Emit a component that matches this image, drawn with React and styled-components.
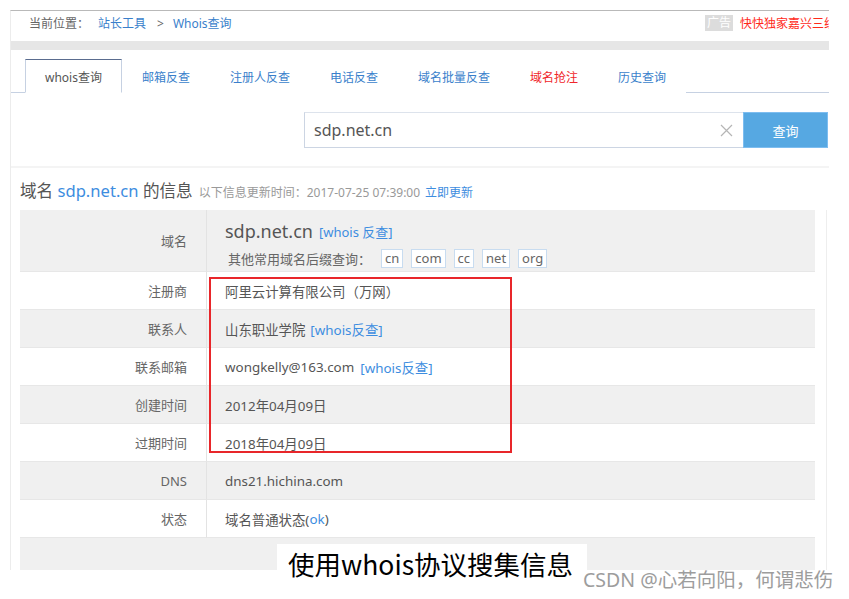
import React from "react";
import styled, { createGlobalStyle } from "styled-components";

const GlobalStyle = createGlobalStyle`
  html, body { margin: 0; padding: 0; background: #fff; }
  body { font-family: "Noto Sans", "Noto Sans CJK SC", sans-serif; }
  * { box-sizing: border-box; }
`;

const Page = styled.div`
  position: relative;
  width: 849px;
  height: 599px;
  padding: 10px 0 0 10px;
  overflow: hidden;
`;

const Frame = styled.div`
  width: 819px;
  height: 560px;
  border-top: 1px solid #b9b9b9;
  border-left: 1px solid #ececec;
  overflow: hidden;
  display: flex;
  flex-direction: column;
`;

const Breadcrumb = styled.div`
  height: 30px;
  flex-shrink: 0;
  display: flex;
  align-items: center;
  padding: 0 0 6px 18px;
  font-size: 12px;
  color: #666;
  white-space: nowrap;
`;

const Crumb = styled.span`
  color: ${(p) => (p.$link ? "#3a7fcb" : "#666")};
  margin-left: ${(p) => p.$ml || 0}px;
`;

const AdBox = styled.div`
  margin-left: auto;
  width: 124px;
  flex-shrink: 0;
  overflow: hidden;
  display: flex;
  align-items: center;
  gap: 7px;
`;

const AdBadge = styled.span`
  background: #dcdcdc;
  color: #fff;
  font-size: 12px;
  line-height: 16px;
  padding: 0 2px;
  flex-shrink: 0;
`;

const AdText = styled.span`
  color: #ff2a1a;
  font-size: 12px;
  flex-shrink: 0;
`;

const GrayBand = styled.div`
  height: 9px;
  flex-shrink: 0;
  background: #e6e6e6;
`;

const TabBar = styled.div`
  flex-shrink: 0;
  display: flex;
  padding: 9px 0 0 14px;
  border-bottom: 1px solid #c6d1e2;
`;

const Tab = styled.div`
  height: 34px;
  padding: 0 19px;
  display: flex;
  align-items: center;
  padding-top: 1px;
  font-size: 12px;
  white-space: nowrap;
  margin-bottom: -1px;
  border: 1px solid ${(p) => (p.$active ? "#c6d1e2" : "transparent")};
  border-top-color: ${(p) => (p.$active ? "#5a6c8f" : "transparent")};
  border-bottom-color: ${(p) => (p.$active ? "#fff" : "transparent")};
  background: #fff;
  color: ${(p) => (p.$active ? "#555" : p.$red ? "#f0262a" : "#3a7fcb")};
`;

const SearchArea = styled.div`
  flex-shrink: 0;
  height: 75px;
  padding: 19px 0 0 293px;
  display: flex;
  align-items: flex-start;
  border-bottom: 2px solid #f4f4f4;
`;

const SearchInput = styled.div`
  width: 439px;
  height: 36px;
  border: 1px solid #ccd5e3;
  border-top-color: #dde3ec;
  border-right: none;
  display: flex;
  align-items: center;
  padding: 0 10px 0 9px;
  font-size: 16px;
  color: #555;
`;

const ClearIcon = styled.svg`
  margin-left: auto;
  width: 13px;
  height: 13px;
`;

const SearchButton = styled.div`
  width: 85px;
  height: 36px;
  background: #56a8e2;
  border: 1px solid #7dbdf0;
  color: #fff;
  font-size: 13px;
  display: flex;
  align-items: center;
  justify-content: center;
`;

const InfoSection = styled.div`
  padding-left: 9px;
  flex: 1;
  display: flex;
  flex-direction: column;
`;

const Title = styled.div`
  height: 42px;
  padding-top: 10px;
  line-height: 26px;
  font-size: 16.6px;
  color: #555;
  white-space: nowrap;
`;

const TitleLink = styled.span`
  color: #3d8de0;
`;

const UpdateNote = styled.span`
  font-size: 12px;
  color: #999;
  margin-left: 6px;
`;

const UpdateLink = styled.span`
  font-size: 12px;
  color: #3d8de0;
  margin-left: 5px;
`;

const TableWrap = styled.div`
  flex: 1;
  width: 807px;
  padding-right: 12px;
  border-right: 1px solid #eeeeee;
`;

const Table = styled.div`
  width: 795px;
  display: grid;
  grid-template-columns: 187px 1fr;
`;

const Label = styled.div`
  height: ${(p) => p.$h || 38}px;
  background: ${(p) => (p.$gray ? "#f0f0f0" : "#fff")};
  border-right: 1px solid #e3e3e3;
  border-bottom: 1px solid #e7e7e7;
  display: flex;
  align-items: center;
  justify-content: flex-end;
  padding-right: 19px;
  font-size: 13px;
  color: #666;
`;

const Value = styled.div`
  height: ${(p) => p.$h || 38}px;
  background: ${(p) => (p.$gray ? "#f0f0f0" : "#fff")};
  border-bottom: 1px solid #e7e7e7;
  display: flex;
  align-items: center;
  padding-left: 18px;
  font-size: 13.4px;
  color: #555;
  white-space: nowrap;
`;

const FullRow = styled.div`
  grid-column: 1 / -1;
  height: 40px;
  background: #f0f0f0;
`;

const DomainValue = styled(Value)`
  flex-direction: column;
  align-items: flex-start;
  justify-content: flex-start;
  padding-top: 8px;
  font-size: 13px;
`;

const DomainLine = styled.div`
  height: 26px;
  display: flex;
  align-items: center;
`;

const DomainName = styled.span`
  font-size: 18px;
  color: #555;
`;

const Link = styled.span`
  color: #3d8de0;
  margin-left: ${(p) => p.$ml ?? 5}px;
`;

const SuffixLine = styled.div`
  margin-top: 4px;
  padding-left: 3px;
  height: 20px;
  display: flex;
  align-items: center;
  color: #666;
`;

const Suffix = styled.span`
  border: 1px solid #c8dcf0;
  background: #fff;
  height: 19px;
  line-height: 17px;
  padding: 0 3px;
  margin-left: ${(p) => p.$ml ?? 8}px;
  font-size: 13px;
  color: #666;
`;

const RedBox = styled.div`
  position: absolute;
  left: 209px;
  top: 277px;
  width: 303px;
  height: 176px;
  border: 2px solid #e8262a;
  pointer-events: none;
`;

const Caption = styled.div`
  position: absolute;
  left: 277px;
  top: 544px;
  width: 310px;
  height: 40px;
  background: #fff;
  padding-left: 11px;
  line-height: 40px;
  font-size: 26.5px;
  color: #000;
  font-family: "Noto Sans CJK SC", sans-serif;
  white-space: nowrap;
`;

const Watermark = styled.div`
  position: absolute;
  left: 583px;
  top: 569px;
  line-height: 22px;
  font-size: 19.5px;
  color: #9d9d9d;
  font-family: "Noto Sans", "Noto Sans CJK SC", sans-serif;
  white-space: nowrap;
`;

const tabs = [
  { t: "whois查询", active: true },
  { t: "邮箱反查" },
  { t: "注册人反查" },
  { t: "电话反查" },
  { t: "域名批量反查" },
  { t: "域名抢注", red: true },
  { t: "历史查询" },
];

const rows = [
  { l: "注册商", v: <>阿里云计算有限公司（万网）</> },
  { l: "联系人", v: <>山东职业学院<Link>[whois反查]</Link></> },
  { l: "联系邮箱", v: <>wongkelly@163.com<Link $ml={6}>[whois反查]</Link></> },
  { l: "创建时间", v: <>2012年04月09日</> },
  { l: "过期时间", v: <>2018年04月09日</> },
  { l: "DNS", v: <>dns21.hichina.com</> },
  { l: "状态", v: <>域名普通状态(<Link $ml={0}>ok</Link>)</> },
];

export default function App() {
  return (
    <>
      <GlobalStyle />
      <Page>
        <Frame>
          <Breadcrumb>
            <Crumb>当前位置：</Crumb>
            <Crumb $link $ml={9}>站长工具</Crumb>
            <Crumb $ml={11}>&gt;</Crumb>
            <Crumb $link $ml={9}>Whois查询</Crumb>
            <AdBox>
              <AdBadge>广告</AdBadge>
              <AdText>快快独家嘉兴三线</AdText>
            </AdBox>
          </Breadcrumb>
          <GrayBand />
          <TabBar>
            {tabs.map((x) => (
              <Tab key={x.t} $active={x.active} $red={x.red}>
                {x.t}
              </Tab>
            ))}
          </TabBar>
          <SearchArea>
            <SearchInput>
              sdp.net.cn
              <ClearIcon viewBox="0 0 13 13">
                <path d="M1 1L12 12M12 1L1 12" stroke="#b5b5b5" strokeWidth="1.2" fill="none" />
              </ClearIcon>
            </SearchInput>
            <SearchButton>查询</SearchButton>
          </SearchArea>
          <InfoSection>
            <Title>
              域名 <TitleLink>sdp.net.cn</TitleLink> 的信息
              <UpdateNote>以下信息更新时间：2017-07-25 07:39:00</UpdateNote>
              <UpdateLink>立即更新</UpdateLink>
            </Title>
            <TableWrap>
              <Table>
                <Label $gray $h={62}>域名</Label>
                <DomainValue $gray $h={62}>
                  <DomainLine>
                    <DomainName>sdp.net.cn</DomainName>
                    <Link $ml={6}>[whois 反查]</Link>
                  </DomainLine>
                  <SuffixLine>
                    其他常用域名后缀查询：
                    <Suffix $ml={10}>cn</Suffix>
                    <Suffix>com</Suffix>
                    <Suffix>cc</Suffix>
                    <Suffix>net</Suffix>
                    <Suffix>org</Suffix>
                  </SuffixLine>
                </DomainValue>
                {rows.map((r, i) => (
                  <React.Fragment key={r.l}>
                    <Label $gray={i % 2 === 1}>{r.l}</Label>
                    <Value $gray={i % 2 === 1}>{r.v}</Value>
                  </React.Fragment>
                ))}
                <FullRow />
              </Table>
            </TableWrap>
          </InfoSection>
        </Frame>
        <RedBox />
        <Caption>使用whois协议搜集信息</Caption>
        <Watermark>CSDN @心若向阳，何谓悲伤</Watermark>
      </Page>
    </>
  );
}
